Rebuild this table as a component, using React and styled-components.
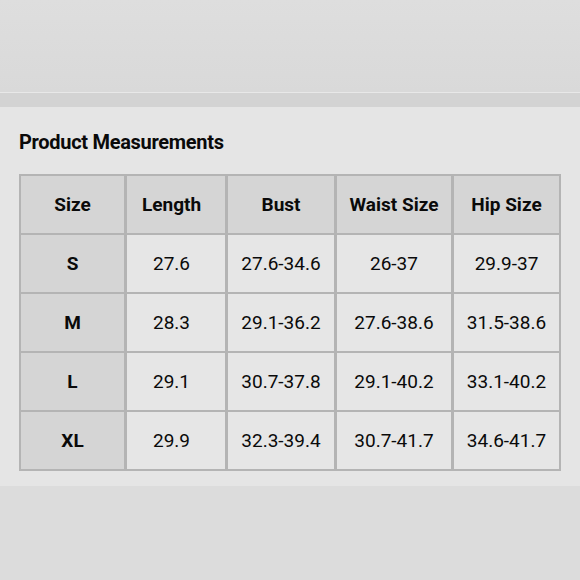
import React from 'react';
import styled, { createGlobalStyle } from 'styled-components';

const GlobalStyle = createGlobalStyle`
  body {
    margin: 0;
    background: #dcdcdc;
    font-family: Roboto, "Liberation Sans", Arial, sans-serif;
  }
`;

const headers = ['Size', 'Length', 'Bust', 'Waist Size', 'Hip Size'];
const rows = [
  ['S', '27.6', '27.6-34.6', '26-37', '29.9-37'],
  ['M', '28.3', '29.1-36.2', '27.6-38.6', '31.5-38.6'],
  ['L', '29.1', '30.7-37.8', '29.1-40.2', '33.1-40.2'],
  ['XL', '29.9', '32.3-39.4', '30.7-41.7', '34.6-41.7'],
];

function App() {
  return (
    <Page>
      <GlobalStyle />
      <TopArea />
      <Divider />
      <Card>
        <Title>Product Measurements</Title>
        <Grid>
          {headers.map((h, i) => (
            <Cell key={h} head shift={i === 1}>{h}</Cell>
          ))}
          {rows.map(r =>
            r.map((v, i) => (
              <Cell key={r[0] + i} head={i === 0} shift={i === 1}>{v}</Cell>
            ))
          )}
        </Grid>
      </Card>
    </Page>
  );
}

export default App;

const Page = styled.div`
  width: 580px;
  height: 580px;
  background: #dcdcdc;
  overflow: hidden;
`;

const TopArea = styled.div`
  height: 92px;
  background: linear-gradient(180deg, #dedede, #d9d9d9);
  border-bottom: 1px solid #e8e8e8;
`;

const Divider = styled.div`
  height: 14px;
  background: #d3d3d3;
`;

const Card = styled.div`
  background: #e5e5e5;
  padding: 24px 19px 15px 19px;
`;

const Title = styled.div`
  font-size: 20px;
  font-weight: 700;
  line-height: 22px;
  color: #0a0a0a;
  letter-spacing: -0.3px;
  margin-bottom: 21px;
`;

const Grid = styled.div`
  display: grid;
  grid-template-columns: 103px 98px 106px 114px 105px;
  grid-auto-rows: 57px;
  column-gap: 3px;
  row-gap: 2px;
  padding: 2px;
  background: #b4b4b4;
  width: max-content;
`;

const Cell = styled.div`
  display: flex;
  align-items: center;
  justify-content: center;
  padding-right: ${p => (p.shift ? '9px' : '0')};
  background: ${p => (p.head ? '#d5d5d5' : '#e6e6e6')};
  font-size: 19px;
  font-weight: ${p => (p.head ? 700 : 400)};
  color: #0a0a0a;
`;
